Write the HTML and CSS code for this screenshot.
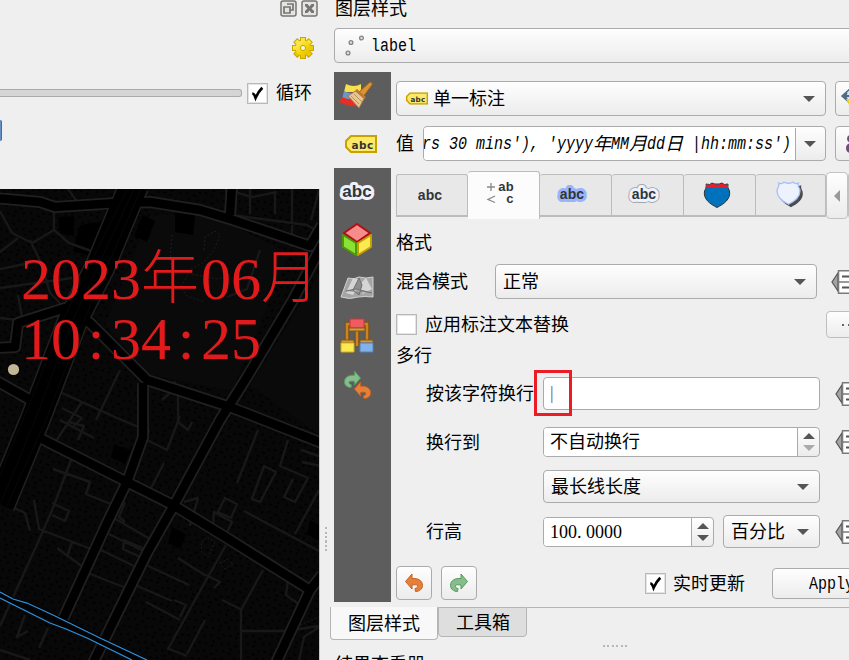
FILE: index.html
```html
<!DOCTYPE html>
<html lang="zh-CN">
<head>
<meta charset="utf-8">
<title>图层样式</title>
<link rel="stylesheet" href="styles.css">
</head>
<body>
<svg class="defs" width="0" height="0">
  <defs>
    <linearGradient id="gold" x1="0" y1="0" x2="1" y2="1"><stop offset="0" stop-color="#fff27a"/><stop offset=".6" stop-color="#f2d500"/><stop offset="1" stop-color="#d9b400"/></linearGradient>
    <symbol id="undo" viewBox="0 0 20 20"><path d="M1.500 8.500 8 1v4.500c6-.5 10.500 2 10.500 7 0 3.500-3 6-7 6l-.5-3c2-.3 3-1.500 2.500-3-.5-.8-2.500-1-5.500-.5v4z" fill="#e5803c" stroke="#c8601e"/></symbol>
    <symbol id="redo" viewBox="0 0 20 20"><path d="M18.500 8.500 12 1v4.500c-6-.5-10.500 2-10.500 7 0 3.500 3 6 7 6l.5-3c-2-.3-3-1.500-2.500-3 .5-.8 2.500-1 5.500-.5v4z" fill="#86bd8b" stroke="#559a5f"/></symbol>
    <symbol id="tag" viewBox="0 0 32 18"><path d="M6 1h25v16H6L1 12V6z" fill="#fbe96a" stroke="#c8a000" stroke-width="2"/><text x="17.500" y="13.500" text-anchor="middle" class="tag-text">abc</text></symbol>
    <symbol id="override" viewBox="0 0 24 24"><path d="M7 3v18L1 12z" fill="#a2a3a4" stroke="#555" stroke-width="1.200"/><path d="M7.500 .8H24v22.400H7.500zM7.500 12H24" fill="#fff" stroke="#7a7a76" stroke-width="1.500"/><path d="M11 6.500h13M11 17.500h13" stroke="#555" stroke-width="2"/></symbol>
    <symbol id="check" viewBox="0 0 22 22"><path d="M5.500 11c1.500 0 2.500 1.500 3.500 4.500C11 11 13 8 16 5" fill="none" stroke="#000" stroke-width="2.800"/></symbol>
    <symbol id="shield" viewBox="0 0 30 28"><path d="M4 3q4 1.500 6-1 3 1.500 5 1 2 .5 5-1 2 2.500 6 1-1 3 1.500 7C29 18 22 23 15 26.500 8 23 1 18 2.500 10 5 6 4 3 4 3z"/></symbol>
  </defs>
</svg>
<div class="window">
  <section class="left">
    <div class="dock-buttons">
      <svg width="17" height="17" viewBox="0 0 17 17"><rect x="1" y="1" width="15" height="15" rx="2" fill="#e4e4e2" stroke="#777571" stroke-width="1.500"/><path d="M7 4h6v6h-3M4 7h6v6H4z" fill="none" stroke="#777571" stroke-width="1.700"/></svg>
      <svg width="17" height="17" viewBox="0 0 17 17"><rect x="1" y="1" width="15" height="15" rx="2" fill="#e4e4e2" stroke="#777571" stroke-width="1.500"/><path d="M4 4h2.500L8.500 6.500 10.500 4H13v2L10.500 8.500 13 11v2h-2.500l-2-2.500-2 2.500H4v-2l2.500-2.500L4 6z" fill="#777571"/></svg>
    </div>
    <div class="gear">
      <svg width="24" height="24" viewBox="-12 -12 24 24"><g fill="#c9a400"><path id="teeth" d="M-3-11h6v22h-6zM-11-3h22v6h-22z"/><use href="#teeth" transform="rotate(45)"/></g><g fill="url(#gold)"><path id="inner" d="M-2-10h4v20h-4zM-10-2h20v4h-20z"/><use href="#inner" transform="rotate(45)"/><circle r="7.500"/></g><circle r="2.600" fill="#f7f4dc" stroke="#c9a400"/></svg>
    </div>
    <div class="loop">
      <div class="track"></div>
      <span class="checkbox"><svg width="21" height="21"><use href="#check"/></svg></span>
      <span class="loop-label">循环</span>
    </div>
    <div class="blue-edge"></div>
    <div class="map">
      <svg width="319" height="471" viewBox="0 189 319 471">
        <defs>
          <pattern id="houses" width="19" height="17" patternUnits="userSpaceOnUse" patternTransform="rotate(25)"><path d="M1 2h3v2H1zM8 1h2v3H8zM14 4h3v2h-3zM3 9h2v3H3zM10 9h4v2h-4zM16 12h2v3h-2zM7 14h3v2H7z" fill="#020202"/></pattern>
        </defs>
        <path d="M0 189h319v471H0z" fill="#080808"/>
        <path d="M0 189h319v471H0z" fill="url(#houses)"/>
        <path d="M150 215l60 0 80 38-58 138-85-17-42-50zM250 385l69-110v160z" fill="#0a0a0a"/>
        <path d="M58 217l16-1 0 20-14-3zM80 225l25-4-15 35-17-5zM143 215l12 6-8 21-13-6zM175 213l20 2-2 20-18-3zM114 445l17 5-6 14-14-7zM172 527l14 8-6 14-12-6zM310 520l9 5v16l-12-7z" fill="#000"/>
        <g class="minor">
          <path d="M0 211l12 22 20 10 22-13V207M0 252l18-14M30 240l12 25 8 28 18 18M0 269l40-8M0 288l72-10M54 230l15 13 25 9M68 189l10 14M0 318l18 2M18 295l5 27M260 250l-13 39-20 8M232 215l75 10 12 7M250 189v25M275 192v22M292 189v58M319 190l-8 30M225 189l27 8 25-5M162 400l9-8 4-11M178 395v27l10 8 4-8M60 392l55 25 35 15 M120 370l-24 50M62 408l20 10-10 10M69 422l15 4-6 14"/>
          <path d="M82 402l-28 42 34 17M71 460l-18 48-14 32-39 86M53 469l37 13-4 12 27 11M34 500l5 29 52 20M52 503l17 8-4 10-13-6M57 548l27 20M72 542l-5 15M88 573l38 15M101 550l33 16M112 517l38 22M125 502l-6 15 6 5M109 534l38 19M124 540l21 9-5 8-17-8zM148 566l41 19M178 558l28 18M135 585l37 16M146 602l34 18M174 600l12 5-6 12M143 438l24 12 13-34M164 463l-15 29M60 420l34 18M258 430l-21 53M288 440l-8 26 28 12-13 24-11-5 9-18M319 490l-24 44M244 511l75 40M226 545l-26 46-32 58M206 575l14 7-6 6M263 570l-22 40v50M241 631h45l33-5M222 600l20 10M167 648l20 8M205 620l-18 34M48 628l-9 20M25 615l-8 22 11-6M0 650l30 10M300 440l19 5M301 450l18 6M302 462l19 4M225 498l12 6-6 14-13-6zM214 512l18 10-6 12-13-7zM184 502l14-4-8 28M264 466l12 6-16 30-8-3zM288 580l-2 15 14 10M299 660l5-23 15-10M0 501l25 12 5 18"/>
        </g>
        <g class="road edge">
          <path class="wide" d="M134 185 100 267 73 320 35 420 0 505"/>
          <path id="roads" d="M-5 198 40 202 55 207 117 203 150 202 200 210 233 220 310 246 322 225M232 185 230 215M-5 348 15 347 18 323 65 308 90 323 147 380 230 407 322 443M322 245 293 300 247 377 220 420 173 507 147 553 92 665M-5 380 34 402M40 438 127 482 173 505 227 538 310 590 275 665M322 575 310 590M143 383V437L127 482 107 523 63 619"/>
        </g>
        <g class="road inside">
          <path class="wide" d="M134 185 100 267 73 320 35 420 0 505"/>
          <path d="M-5 198 40 202 55 207 117 203 150 202 200 210 233 220 310 246 322 225M232 185 230 215M-5 348 15 347 18 323 65 308 90 323 147 380 230 407 322 443M322 245 293 300 247 377 220 420 173 507 147 553 92 665M-5 380 34 402M40 438 127 482 173 505 227 538 310 590 275 665M322 575 310 590M143 383V437L127 482 107 523 63 619"/>
        </g>
        <path class="lanes" d="M127 189 63 320 27 410 0 475M134 189 73 320 35 420 0 505M141 189 84 320 46 420 0 521"/>
        <path class="dotted" d="M172 235l-2 25 4 15M204 250l1-13 10-6 5 4-6 15-10 12-13 7-10 18 6 9 18 6M192 274l25 5 14-4M202 542l5-5 8 5-7 15-7-6zM220 563l7-4 6 5-8 5zM300 625l19-8"/>
        <path d="M0 594 13 601 27 605 53 617 100 640 140 660" stroke="#030303" stroke-width="7" fill="none"/>
        <path d="M0 592 13 599 27 603 53 615 100 638 147 660M0 598 50 623 66 629 87 638 132 660" stroke="#2b91df" stroke-width="1.300" fill="none"/>
        <circle cx="13.500" cy="369.500" r="5.600" fill="#c2b695"/>
      </svg>
      <div class="stamp">
        <div>2023<span class="han">年</span>06<span class="han moon">月</span></div>
        <div>10<i>:</i>34<i>:</i>25</div>
      </div>
    </div>
  </section>
  <div class="splitter"><span></span></div>
  <section class="right">
    <div class="title">图层样式</div>
    <div class="layer button-face">
      <svg width="26" height="26" viewBox="0 0 26 26" fill="#ddd" stroke="#858585" stroke-width="1.300"><circle cx="9" cy="20" r="1.900"/><circle cx="12" cy="9.500" r="1.900"/><circle cx="22.500" cy="5" r="1.900"/></svg>
      <span class="mono">label</span>
    </div>
    <div class="body">
      <nav class="sidebar">
        <div class="side"><svg width="36" height="30" viewBox="0 0 36 30"><path d="M7 3q8 4 15 0v8H5z" fill="#f6e04b"/><path d="M5 10q8 4 15 1v7H3z" fill="#6c95c8"/><path d="M3 16q8 4 15 1v8q-8 1-18-4z" fill="#e52f25"/><path d="m20 11 11-10q3 0 2 3L24 16z" fill="#db9335" stroke="#9a611c"/><path d="m9 15 9-6 8 7-6 11z" fill="#e8c493" stroke="#a77b45"/><path d="m16 10 2-2 9 8-2 2z" fill="#bc7b2e"/><path d="m12 15 8 8m-5-10 8 8" stroke="#b9925f"/></svg></div>
        <div class="side active"><svg width="32" height="18"><use href="#tag"/></svg></div>
        <div class="side"><svg width="38" height="26" viewBox="0 0 38 26"><text x="19" y="18" class="halo big pale">abc</text><text x="19" y="18" class="glyph big">abc</text></svg></div>
        <div class="side"><svg width="32" height="36" viewBox="0 0 32 36" stroke-width="2" stroke-linejoin="round"><path d="m16 2 13 9-13 9-13-9z" fill="#f58d8d" stroke="#b30d12"/><path d="M2 13 15 21v12L2 25z" fill="#8ce234" stroke="#4e9a06"/><path d="m30 13-13 8v12l13-8z" fill="#fbe94f" stroke="#c4a000"/></svg></div>
        <div class="side"><svg width="36" height="26" viewBox="0 0 36 26"><path d="M9 3q6 2 11-1 7 2 14 0v20q-8-1-15 0-8 3-17 0z" fill="#a5a5a5" stroke="#d0d0d0"/><path d="m14 3-7 15 7 2 8-15zM27 3l-8 8 5 8 9-5z" fill="#d5d5d5"/><path d="m20 3-6 12 6 5 3-10zM7 16l10-2 16 4" fill="#8d8d8d" stroke="#707070"/></svg></div>
        <div class="side"><svg width="34" height="36" viewBox="0 0 34 36"><path d="M7 22V6h20v16M17 8v20" fill="none" stroke="#7e510f" stroke-width="4.500"/><path d="M7 22V6h20v16M17 8v20" fill="none" stroke="#c98424" stroke-width="2.500"/><path d="M10 1h14v9H10z" fill="#ef5b60" stroke="#c93939"/><path d="M9 10h16v3H9zM1 22h13v3H1zM20 22h13v3H20z" fill="#d99a3e" stroke="#85581a"/><path d="M1 25h13v9H1z" fill="#fce94f" stroke="#d3b016"/><path d="M20 25h13v9H20z" fill="#83b1ea" stroke="#4f82bd"/></svg></div>
        <div class="side history"><svg width="19" height="19"><use href="#redo"/></svg><svg width="19" height="19"><use href="#undo"/></svg></div>
      </nav>
      <div class="content">
        <div class="row mode">
          <div class="combo button-face"><svg width="22" height="13" viewBox="0 0 32 18"><use href="#tag"/></svg><span>单一标注</span><b class="down"></b></div>
          <div class="tool button-face"><svg width="24" height="24" viewBox="0 0 24 24"><path d="m2 10 9-8 9 8-9 8z" fill="#dbe6ee" stroke="#4b6a80" stroke-width="1.500"/><path d="M5 10h10M7 7l-3 3 3 3" stroke="#4b6a80" stroke-width="2" fill="none"/><path d="m6 13 3 6 5-5z" fill="#f0cf18"/></svg></div>
        </div>
        <div class="row value">
          <span class="name">值</span>
          <div class="expr button-face"><div class="text"><span class="mono" style="--n:19">rs 30 mins'), 'yyyy</span>年<span class="mono" style="--n:2">MM</span>月<span class="mono" style="--n:2">dd</span>日<span class="mono" style="--n:12"> |hh:mm:ss')</span></div><b class="down"></b></div>
          <div class="tool button-face"><svg width="24" height="24" viewBox="0 0 24 24"><path d="M17 4h-6q-4 0-4 4 0 3 4 4-5 1-5 5 0 5 5 5h6z" fill="#734b78"/><circle cx="12" cy="8" r="2" fill="#eee"/><circle cx="12" cy="17" r="2" fill="#eee"/></svg></div>
        </div>
        <div class="tabs">
          <div class="tab"><svg width="40" height="28"><text x="20" y="19" class="glyph">abc</text></svg></div>
          <div class="tab current"><svg width="32" height="28" viewBox="0 0 32 28"><text x="21" y="11" class="glyph small">ab</text><text x="25" y="23" class="glyph small">c</text><path d="M2 7h8M6 3v8M10 16l-7 3.500 7 3" fill="none" stroke="#888" stroke-width="1.300"/></svg></div>
          <div class="tab"><svg width="40" height="28"><text x="18" y="18" class="halo blue">abc</text><text x="18" y="18" class="glyph">abc</text></svg></div>
          <div class="tab"><svg width="40" height="28"><text x="18" y="18" class="halo rim">abc</text><text x="18" y="18" class="halo pale">abc</text><text x="18" y="18" class="glyph">abc</text></svg></div>
          <div class="tab shielded"><svg width="32" height="28" viewBox="0 0 30 28"><use href="#shield" width="30" height="28" fill="#0071bc" stroke="#333"/><path d="M4.500 3.500q3.500 1 5.500-1 3 1.500 5 1 2 .5 5-1 2 2 5.500 1l.5 3.500H4z" fill="#ed1c24"/></svg></div>
          <div class="tab shielded"><svg width="32" height="30" viewBox="0 0 32 30"><use href="#shield" x="3" y="2" width="28" height="27" fill="#4b4b4d"/><use href="#shield" x="1" y="0" width="27" height="26" fill="#eef2ff" stroke="#a8c0f8" stroke-width="1.500"/></svg></div>
          <div class="scroll button-face"><b class="prev"></b></div><div class="scroll button-face"></div>
        </div>
        <div class="heading format">格式</div>
        <div class="row blend"><span class="name">混合模式</span><div class="combo button-face"><span>正常</span><b class="down"></b></div><svg class="override" width="24" height="24"><use href="#override"/></svg></div>
        <div class="row subst"><span class="checkbox"></span><span class="sub-label">应用标注文本替换</span><div class="more button-face"><i></i><i></i><i></i></div></div>
        <div class="heading multi">多行</div>
        <div class="row wrap"><span class="name">按该字符换行</span><div class="input"><span>|</span><div class="marker"></div></div><svg class="override" width="24" height="24"><use href="#override"/></svg></div>
        <div class="row auto"><span class="name">换行到</span><div class="spin button-face"><div class="spin-text">不自动换行</div><div class="arrows"><b class="up"></b><b class="down off"></b></div></div><svg class="override" width="24" height="24"><use href="#override"/></svg></div>
        <div class="row longest"><div class="combo button-face"><span>最长线长度</span><b class="down"></b></div></div>
        <div class="row height"><span class="name">行高</span><div class="spin button-face"><div class="spin-text num">100<i>.</i>0000</div><div class="arrows"><b class="up"></b><b class="down"></b></div></div><div class="combo button-face"><span>百分比</span><b class="down"></b></div><svg class="override" width="24" height="24"><use href="#override"/></svg></div>
        <div class="row actions">
          <div class="square button-face"><svg width="20" height="20"><use href="#undo"/></svg></div>
          <div class="square button-face"><svg width="20" height="20"><use href="#redo"/></svg></div>
          <span class="checkbox live"><svg width="21" height="21"><use href="#check"/></svg></span><span class="live-label">实时更新</span>
          <div class="apply button-face"><span class="mono">Apply</span></div>
        </div>
      </div>
    </div>
    <div class="dock-tabs"><div class="dock-tab on">图层样式</div><div class="dock-tab">工具箱</div><div class="rule"></div></div>
    <div class="handle"></div>
    <div class="title results">结果查看器</div>
  </section>
</div>
</body>
</html>
```
FILE: styles.css
```css
* { box-sizing: border-box; }
body { margin: 0; width: 849px; height: 660px; overflow: hidden; background: #efefef; color: #000; font: 18px/24px "Liberation Serif", "Noto Sans CJK SC", sans-serif; }
svg { display: block; flex: none; }
.defs { position: absolute; }
.window { display: flex; width: 849px; height: 660px; overflow: hidden; }
.left { width: 319px; flex: none; }
.dock-buttons { display: flex; justify-content: flex-end; gap: 4px; height: 36px; padding-right: 1px; }
.gear { display: flex; justify-content: flex-end; height: 46px; padding-right: 4px; }
.loop { display: flex; align-items: center; height: 22px; }
.track { width: 242px; height: 8px; border: 1px solid #aaa; border-left: 0; border-radius: 0 3px 3px 0; background: #d5d5d5; flex: none; }
.checkbox { width: 21px; height: 21px; flex: none; border: 1px solid #b9b9b9; background: #fff; box-shadow: inset 0 0 0 1px #e4e4e4; }
.checkbox svg { margin: -1px; }
.loop .checkbox { margin-left: 5px; }
.loop-label { margin-left: 8px; }
.blue-edge { width: 2px; height: 21px; margin: 16px 0 48px; background: #6690c4; border-right: 1px solid #496b98; border-radius: 0 2px 2px 0; }
.map { position: relative; width: 319px; height: 471px; }
.minor { fill: none; stroke: #181818; stroke-width: 2.4; stroke-linejoin: round; }
.road { fill: none; stroke-linejoin: round; }
.edge { stroke: #202020; stroke-width: 12; }
.edge .wide { stroke-width: 31; }
.inside { stroke: #000; stroke-width: 8.5; }
.inside .wide { stroke-width: 28; }
.lanes { fill: none; stroke: #080808; }
.dotted { fill: none; stroke: #1e1e1e; stroke-dasharray: 2 2; }
.stamp { position: absolute; left: 21px; top: 60px; color: #e31a1c; font-size: 60px; line-height: 60px; white-space: nowrap; }
.stamp div { display: flex; height: 60px; }
.stamp .han { width: 60px; height: 60px; font-size: 58px; font-weight: 300; }
.stamp .moon { width: 56px; }
.stamp i { width: 30px; text-align: center; font-style: normal; }
.splitter { width: 15px; flex: none; border-left: 1px solid #c6c6c6; margin-top: 189px; }
.splitter span { display: block; width: 2px; height: 24px; margin: 338px 0 0 5px; background: repeating-linear-gradient(#b8b8b8 0 2px, transparent 2px 4.5px); }
.right { width: 515px; flex: none; }
.title { height: 28px; line-height: 19px; padding-left: 1px; }
.button-face { border: 1.5px solid #ababab; border-radius: 4px; background: linear-gradient(#fefefe, #ececec); flex: none; }
.layer { height: 35px; width: 540px; display: flex; align-items: center; padding-left: 4px; }
.layer .mono { margin-left: 6px; }
.mono { display: inline-block; font-family: "Liberation Mono", monospace; white-space: pre; transform: scaleX(.833); transform-origin: left; margin-right: calc(var(--n, 5) * -1.8px); }
.body { display: flex; margin-top: 9px; height: 530px; }
.sidebar { width: 57px; background: #5d5d5d; flex: none; padding-right: 11px; }
.side { height: 48px; display: flex; align-items: center; justify-content: center; }
.side.active { background: #efefef; width: 57px; padding-right: 3px; }
.history svg { margin: -10px -4px 0 -2px; }
.history svg + svg { margin: 12px -2px 0 -5px; }
.tag-text { font: bold 10.5px "DejaVu Sans", sans-serif; fill: #333; letter-spacing: .4px; }
.glyph, .halo { font: bold 14px "Liberation Sans", sans-serif; text-anchor: middle; fill: #303638; letter-spacing: .1px; }
.glyph.big, .halo.big { font-size: 17px; }
.glyph.small { font-size: 13px; }
.halo { stroke-width: 6; stroke-linejoin: round; stroke: #edf1ff; fill: #edf1ff; }
.halo.blue { stroke: #99b3fc; }
.halo.rim { stroke: #999; stroke-width: 7.5; }
.content { width: 458px; margin-left: 5px; padding-top: 9px; flex: none; }
.row { display: flex; align-items: center; }
.name { flex: none; }
.combo { display: flex; align-items: center; height: 35px; padding: 0 10px 0 7px; }
.combo span, .name, .sub-label, .live-label { position: relative; top: .5px; }
.combo svg { margin: 0 5px 0 2px; }
.down, .up { border: 6px solid transparent; border-top-color: #555; border-bottom: 0; flex: none; width: 12px; height: 6px; }
.combo .down { margin-left: auto; }
.up { border-top: 0; border-bottom: 6px solid #555; }
.off { border-top-color: #aaa; }
.tool { width: 40px; height: 35px; margin-left: 9px; padding: 4px; }
.mode { height: 35px; }
.mode .combo { width: 430px; }
.value { height: 35px; margin-top: 10px; }
.expr { width: 403px; height: 35px; margin-left: 9px; display: flex; align-items: center; overflow: hidden; }
.expr .text { width: 372px; height: 32px; line-height: 32px; display: flex; justify-content: flex-end; background: #fff; border-right: 1px solid #aaa; overflow: hidden; font-style: italic; white-space: nowrap; padding-right: 4px; }
.expr .mono { flex: none; }
.expr .down { margin-left: 8px; }
.tabs { display: flex; align-items: flex-end; height: 48px; margin-top: 10px; padding-bottom: 2px; }
.tab { width: 72px; height: 43px; flex: none; display: flex; align-items: center; justify-content: center; border: 1.5px solid #bcbcbc; border-left-width: 0; border-bottom-width: 2px; background: #e8e8e8; border-radius: 3px 3px 0 0; }
.tab:first-child { border-left-width: 1px; padding-right: 5px; }
.tab:nth-child(3), .tab:nth-child(4) { padding-right: 3px; }
.tab.shielded { padding-right: 6px; }
.tab:nth-child(6) { width: 70px; padding-right: 2px; }
.tab.current { height: 48px; margin-bottom: -2px; background: #fcfcfc; border-bottom: 0; padding: 0 6px 3px 0; }
.scroll { width: 22px; height: 47px; margin-bottom: -2px; display: flex; align-items: center; justify-content: center; border-color: #c2c2c2; }
.prev { border: 6px solid transparent; border-right-color: #999; border-left: 0; }
.heading { height: 24px; }
.format { margin-top: 11px; line-height: 26px; }
.blend { height: 35px; margin-top: 10px; }
.blend .combo { width: 322px; margin-left: 27px; }
.override { margin-left: 14px; }
.subst { height: 27px; margin-top: 12px; }
.sub-label { margin-left: 8px; width: 144px; flex: none; white-space: nowrap; }
.more { width: 48px; height: 27px; margin-left: 257px; display: flex; align-items: center; gap: 4px; padding-left: 15px; border-color: #bfbfbf; }
.more i { width: 2px; height: 2px; background: #666; }
.multi { margin-top: 6px; }
.wrap { height: 33px; margin-top: 9px; padding-left: 30px; }
.wrap .name, .auto .name, .height .name { width: 117px; white-space: nowrap; }
.input { position: relative; width: 277px; height: 33px; flex: none; border: 1.5px solid #aaa; border-radius: 4px; background: #fff; padding-left: 6px; line-height: 30px; color: #77508a; }
.marker { position: absolute; left: -10px; top: -8px; width: 38px; height: 46px; border: 3px solid #ed1c24; }
.auto { height: 30px; margin-top: 17px; padding-left: 30px; }
.spin { display: flex; width: 277px; height: 30px; overflow: hidden; }
.spin-text { flex: 1; background: #fff; border-right: 1.5px solid #aaa; padding-left: 6px; line-height: 29px; }
.arrows { width: 21px; display: flex; flex-direction: column; align-items: center; justify-content: center; gap: 6px; }
.longest { height: 33px; margin-top: 13px; padding-left: 147px; }
.longest .combo { width: 277px; height: 33px; }
.height { height: 33px; margin-top: 12px; padding-left: 30px; }
.height .spin { width: 171px; }
.num i { display: inline-block; width: 9px; font-style: normal; }
.height .combo { width: 97px; height: 33px; margin-left: 9px; }
.wrap .override, .auto .override, .height .override { margin-left: 15px; }
.actions { height: 34px; margin-top: 18px; }
.square { width: 36px; height: 34px; display: flex; align-items: center; justify-content: center; }
.square + .square { margin-left: 9px; }
.live { margin-left: 168px; }
.live-label { margin-left: 7px; width: 72px; flex: none; white-space: nowrap; }
.apply { width: 110px; height: 31px; margin-left: 27px; padding-left: 36px; line-height: 28px; }
.dock-tabs { display: flex; align-items: flex-start; margin: 5px 0 0 -4px; height: 39px; position: relative; }
.dock-tab { height: 30px; width: 89px; border: 1.5px solid #b5b5b5; border-radius: 0 0 4px 4px; background: #dedede; line-height: 30px; padding-left: 17px; }
.dock-tab.on { width: 108px; height: 33px; background: #f8f8f8; border-top: 0; line-height: 34px; }
.rule { flex: 1; border-top: 1px solid #b5b5b5; }
.handle { width: 25px; height: 2px; margin-left: 269px; margin-top: -1px; background: repeating-linear-gradient(90deg, #b8b8b8 0 2px, transparent 2px 4.5px); }
.results { margin-top: 9px; }
```
